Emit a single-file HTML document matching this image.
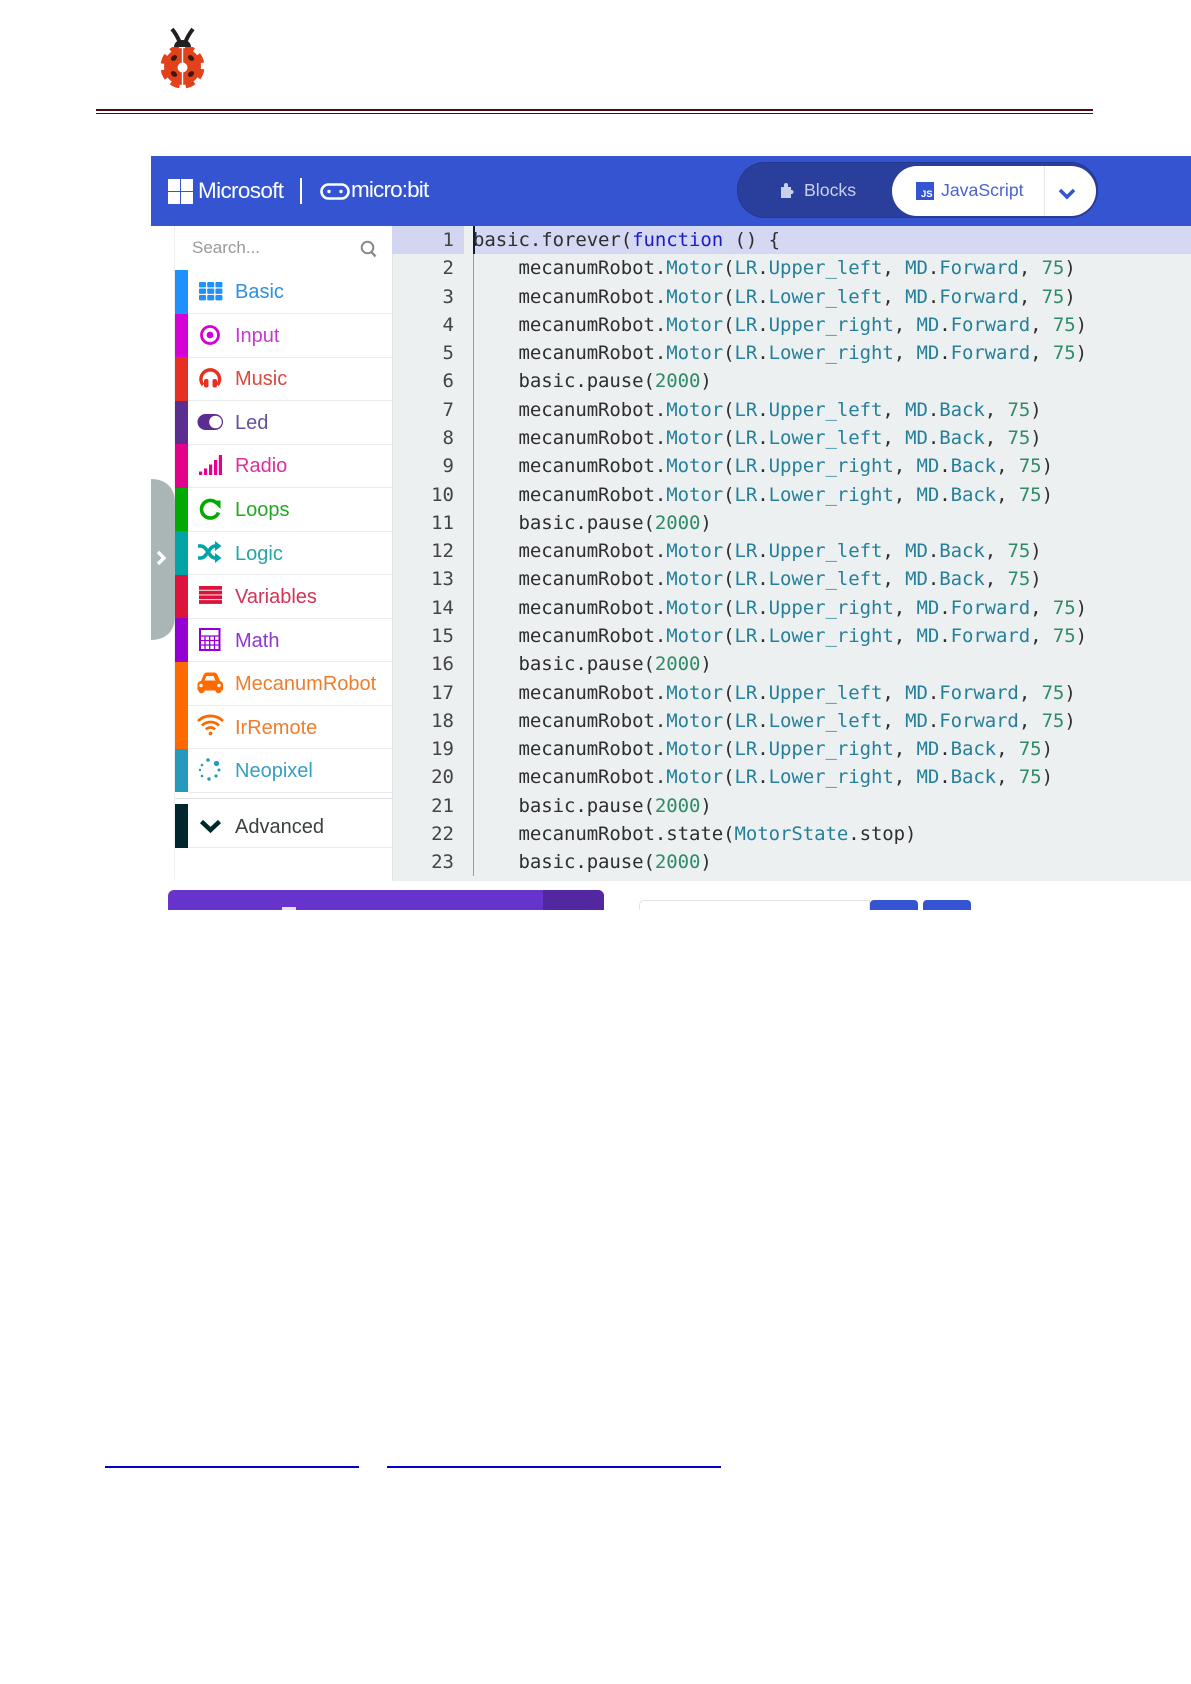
<!DOCTYPE html>
<html lang="en">
<head>
<meta charset="utf-8">
<title>Microbit MakeCode</title>
<style>
html,body{margin:0;padding:0;background:#fff}
body{position:relative;width:1191px;height:1684px;overflow:hidden;font-family:"Liberation Sans",sans-serif}
.a{position:absolute}
.code{position:absolute;left:473px;top:226px;font:19px/28.28px "DejaVu Sans Mono","Liberation Mono",monospace;letter-spacing:-.07px;color:#2e2e2e;white-space:pre;filter:blur(.3px)}
.nums{position:absolute;left:392px;width:62px;top:226px;font:19px/28.28px "DejaVu Sans Mono","Liberation Mono",monospace;color:#444;text-align:right;white-space:pre;filter:blur(.3px)}
.t{color:#267f99}.k{color:#1a1ac8}.n{color:#2f8a68}
.bar{position:absolute;left:175px;width:13px}
.lab{position:absolute;left:235px;font-size:20px;line-height:24px;white-space:nowrap;filter:blur(.3px)}
.sep{position:absolute;left:188px;width:204px;height:1px;background:#eaecec}
svg{position:absolute;overflow:visible}
</style>
</head>
<body>
<!-- logo -->
<svg style="left:0;top:0" width="300" height="100" viewBox="0 0 300 100">
<path d="M172 29 Q177 35 180 43 M193 29 Q188 35 185 43" fill="none" stroke="#231f20" stroke-width="4"/>
<g fill="#e2411c">
<circle cx="182.500" cy="66.500" r="18.500"/>
<circle cx="182.500" cy="66.500" r="19.500" fill="none" stroke="#e2411c" stroke-width="5" pathLength="80" stroke-dasharray="6 4" stroke-dashoffset="3" transform="rotate(22.500 182.500 66.500)"/>
</g>
<rect x="160" y="43" width="45" height="4" fill="#fff"/>
<path d="M174 47 Q174.500 40 182.500 40 Q190.500 40 191 47z" fill="#231f20"/>
<path d="M182.500 47 V86.500" stroke="#fff" stroke-width="1.400"/>
<circle cx="182.500" cy="67.500" r="5" fill="#fff"/>
<g fill="#3a1a10">
<ellipse cx="174" cy="58" rx="3.400" ry="2.500" transform="rotate(-40 174 58)"/><ellipse cx="191" cy="58" rx="3.400" ry="2.500" transform="rotate(40 191 58)"/>
<ellipse cx="174" cy="74" rx="3.400" ry="2.500" transform="rotate(40 174 74)"/><ellipse cx="191" cy="74" rx="3.400" ry="2.500" transform="rotate(-40 191 74)"/>
</g>
</svg>
<div class="a" style="left:96px;top:109px;width:997px;height:2px;background:#4b0a10"></div>
<div class="a" style="left:96px;top:113px;width:997px;height:1px;background:#4b0a10"></div>

<!-- header -->
<div class="a" style="left:151px;top:156px;width:1040px;height:70px;background:#3454d1"></div>
<svg style="left:0;top:0" width="500" height="226" viewBox="0 0 500 226">
<g fill="#fff"><rect x="168" y="179" width="12" height="12"/><rect x="181" y="179" width="12" height="12"/><rect x="168" y="192" width="12" height="12"/><rect x="181" y="192" width="12" height="12"/></g>
<rect x="300" y="178" width="2" height="26" fill="#fff"/>
<rect x="321.500" y="184.500" width="27" height="14" rx="7" fill="none" stroke="#fff" stroke-width="2.600"/>
<circle cx="329" cy="191.500" r="1.700" fill="#fff"/><circle cx="341" cy="191.500" r="1.700" fill="#fff"/>
</svg>
<div class="a" style="left:198px;top:177px;color:#fff;font-size:22.500px;line-height:28px;letter-spacing:-.65px">Microsoft</div>
<div class="a" style="left:351px;top:176px;color:#fff;font-size:22.500px;line-height:28px;letter-spacing:-.85px">micro:bit</div>

<div class="a" style="left:737px;top:162px;width:361px;height:56px;border-radius:28px;background:#2a3f9c;box-shadow:inset 0 0 0 1px #25378a"></div>
<div class="a" style="left:892px;top:166px;width:204px;height:50px;border-radius:25px;background:#fff"></div>
<div class="a" style="left:1044px;top:166px;width:1px;height:50px;background:#e6e6e6"></div>
<svg style="left:0;top:0" width="1191" height="226" viewBox="0 0 1191 226">
<path d="M781 187 h3 v-2 a2 2 0 0 1 4 0 v2 h3 v3 h.5 a1.700 1.700 0 0 1 0 4 h-.5 v4 h-10z" fill="#c9d0ea"/>
<rect x="916" y="182" width="18" height="18" fill="#3454d1"/>
<path d="M1060 190 l7 7 l7 -7" fill="none" stroke="#3454d1" stroke-width="3.500"/>
</svg>
<div class="a" style="left:921px;top:189px;color:#fff;font-size:9.500px;line-height:11px;font-weight:bold">JS</div>
<div class="a" style="left:804px;top:178px;color:#c9d0ea;font-size:17.700px;line-height:24px">Blocks</div>
<div class="a" style="left:941px;top:178px;color:#4a62cf;font-size:17.700px;line-height:24px">JavaScript</div>

<!-- toolbox -->
<div class="a" style="left:174px;top:226px;width:218px;height:655px;background:#fff;border-left:1px solid #eee;box-sizing:border-box"></div>
<div class="a" style="left:192px;top:236px;color:#999;font-size:17px;line-height:24px">Search...</div>
<svg style="left:0;top:0" width="400" height="270" viewBox="0 0 400 270">
<circle cx="367.500" cy="247.500" r="5.800" fill="none" stroke="#8a8a8a" stroke-width="2"/>
<path d="M371.500 252 l4 4.500" stroke="#8a8a8a" stroke-width="2.400"/>
</svg>

<div class="bar" style="top:270px;height:43.500px;background:#1e90ff"></div>
<div class="bar" style="top:313.500px;height:43.500px;background:#d400d4"></div>
<div class="bar" style="top:357px;height:43.500px;background:#e63022"></div>
<div class="bar" style="top:400.500px;height:43.500px;background:#5c2d91"></div>
<div class="bar" style="top:444px;height:43.500px;background:#e3008c"></div>
<div class="bar" style="top:487.500px;height:43.500px;background:#00aa00"></div>
<div class="bar" style="top:531px;height:43.500px;background:#00a4a6"></div>
<div class="bar" style="top:574.500px;height:43.500px;background:#dc143c"></div>
<div class="bar" style="top:618px;height:43.500px;background:#9400d3"></div>
<div class="bar" style="top:661.500px;height:87px;background:#ff6a00"></div>
<div class="bar" style="top:748.500px;height:43.500px;background:#2699bf"></div>
<div class="bar" style="top:804px;height:44px;background:#00272b"></div>

<div class="sep" style="top:313px"></div><div class="sep" style="top:357px"></div><div class="sep" style="top:400px"></div>
<div class="sep" style="top:444px"></div><div class="sep" style="top:487px"></div><div class="sep" style="top:531px"></div>
<div class="sep" style="top:574px"></div><div class="sep" style="top:618px"></div><div class="sep" style="top:661px"></div>
<div class="sep" style="top:705px"></div><div class="sep" style="top:748px"></div><div class="sep" style="top:792px"></div>
<div class="a" style="left:175px;top:798px;width:217px;height:1px;background:#dcdfe0"></div>
<div class="sep" style="top:847px"></div>

<div class="lab" style="top:280px;color:#2f8fe0">Basic</div>
<div class="lab" style="top:324px;color:#c738d0">Input</div>
<div class="lab" style="top:367px;color:#d8493e">Music</div>
<div class="lab" style="top:411px;color:#66509c">Led</div>
<div class="lab" style="top:454px;color:#df2f98">Radio</div>
<div class="lab" style="top:498px;color:#25a825">Loops</div>
<div class="lab" style="top:542px;color:#25a5a6">Logic</div>
<div class="lab" style="top:585px;color:#d33256">Variables</div>
<div class="lab" style="top:629px;color:#8f37d0">Math</div>
<div class="lab" style="top:672px;color:#ee7d2c">MecanumRobot</div>
<div class="lab" style="top:716px;color:#ee7d2c">IrRemote</div>
<div class="lab" style="top:759px;color:#359fc2">Neopixel</div>
<div class="lab" style="top:815px;color:#3a3f40">Advanced</div>

<svg style="left:0;top:0" width="392" height="860" viewBox="0 0 392 860">
<!-- basic -->
<g fill="#1e90ff">
<rect x="199" y="282" width="7" height="5.400" rx="1"/><rect x="207.200" y="282" width="7" height="5.400" rx="1"/><rect x="215.400" y="282" width="7" height="5.400" rx="1"/>
<rect x="199" y="288.500" width="7" height="5.400" rx="1"/><rect x="207.200" y="288.500" width="7" height="5.400" rx="1"/><rect x="215.400" y="288.500" width="7" height="5.400" rx="1"/>
<rect x="199" y="295" width="7" height="5.400" rx="1"/><rect x="207.200" y="295" width="7" height="5.400" rx="1"/><rect x="215.400" y="295" width="7" height="5.400" rx="1"/>
</g>
<!-- input -->
<circle cx="210" cy="335" r="8.500" fill="none" stroke="#d400d4" stroke-width="2.800"/><circle cx="210" cy="335" r="3.400" fill="#d400d4"/>
<!-- music -->
<path d="M203 385 a9.300 9.300 0 1 1 14.500 0" fill="none" stroke="#e63022" stroke-width="3.400"/>
<rect x="204" y="379" width="4.500" height="8.500" rx="2" fill="#e63022"/><rect x="212.500" y="379" width="4.500" height="8.500" rx="2" fill="#e63022"/>
<!-- led -->
<rect x="197.500" y="414" width="25.500" height="16" rx="8" fill="#5c2d91"/><circle cx="215.500" cy="422" r="6.300" fill="#fff"/>
<!-- radio -->
<g fill="#e3008c"><rect x="199" y="471.500" width="3.200" height="3.500"/><rect x="204" y="468.500" width="3.200" height="6.500"/><rect x="209" y="464.500" width="3.200" height="10.500"/><rect x="214" y="460" width="3.200" height="15"/><rect x="218.800" y="455" width="3.200" height="20"/></g>
<!-- loops -->
<path d="M217 503.500 a8.800 8.800 0 1 0 1.500 9" fill="none" stroke="#00aa00" stroke-width="3.600"/><path d="M212 500.500 h8.500 v8.500z" fill="#00aa00"/>
<!-- logic -->
<path d="M198 546 h3 c6 0 8 12 14 12 h2 M198 558 h3 c6 0 8 -12 14 -12 h2" fill="none" stroke="#00a4a6" stroke-width="3.500"/>
<path d="M215 541 l6.500 5 l-6.500 5z M215 553 l6.500 5 l-6.500 5z" fill="#00a4a6"/>
<!-- variables -->
<g fill="#dc143c"><rect x="199" y="586" width="23" height="3.800"/><rect x="199" y="590.700" width="23" height="3.800"/><rect x="199" y="595.400" width="23" height="3.800"/><rect x="199" y="600.100" width="23" height="3.800"/></g>
<!-- math -->
<rect x="200" y="629" width="19.500" height="21" fill="none" stroke="#9400d3" stroke-width="2"/>
<path d="M200 636 h19.500 M200 640.500 h19.500 M200 645 h19.500 M205 636 v14 M209.700 636 v14 M214.500 636 v14" stroke="#9400d3" stroke-width="1.300"/>
<!-- car -->
<path d="M201 681 l2.500 -6 c.7 -1.700 2 -2.500 3.500 -2.500 h7 c1.500 0 2.800 .8 3.500 2.500 l2.500 6 c2 .5 3 2 3 4 v4 c0 1 -.5 1.500 -1.500 1.500 h-22.500 c-1 0 -1.500 -.5 -1.500 -1.500 v-4 c0 -2 1 -3.500 3 -4z" fill="#ff6a00"/>
<circle cx="201.500" cy="690" r="3.200" fill="#ff6a00"/><circle cx="218.500" cy="690" r="3.200" fill="#ff6a00"/>
<path d="M204.500 680.500 l2 -4.500 h7 l2 4.500z" fill="#fff"/>
<circle cx="201" cy="685.500" r="1.700" fill="#fff"/><circle cx="219" cy="685.500" r="1.700" fill="#fff"/>
<!-- wifi -->
<path d="M198 721 a18 18 0 0 1 25 0 M202 725.500 a12 12 0 0 1 17 0 M206 729.500 a6 6 0 0 1 9 0" fill="none" stroke="#ff6a00" stroke-width="2.800"/>
<circle cx="210.500" cy="733.500" r="1.900" fill="#ff6a00"/>
<!-- neopixel -->
<g fill="#2699bf"><circle cx="216.500" cy="763.500" r="2.600"/><circle cx="208" cy="760" r="1.800"/><circle cx="202" cy="765" r="1.300"/><circle cx="200" cy="770" r="1.200"/><circle cx="202" cy="776" r="1.300"/><circle cx="209" cy="779" r="1.700"/><circle cx="216" cy="776" r="1.600"/><circle cx="219" cy="770" r="1.500"/></g>
<!-- advanced -->
<path d="M201.500 821.500 l9 8.500 l9 -8.500" fill="none" stroke="#00272b" stroke-width="4.500"/>
<!-- tab -->
<path d="M151 479 c14 0 24 8 24 24 v113 c0 16 -10 24 -24 24z" fill="#aab6b6"/>
<path d="M158 552 l6 6 l-6 6" fill="none" stroke="#fff" stroke-width="3.400"/>
</svg>

<!-- editor -->
<div class="a" style="left:392px;top:226px;width:799px;height:655px;background:#ecf0f1"></div>
<div class="a" style="left:392px;top:226px;width:1px;height:655px;background:#dfe3e4"></div>
<div class="a" style="left:392px;top:226px;width:72px;height:28px;background:#d2d6f1"></div>
<div class="a" style="left:473px;top:226px;width:718px;height:28px;background:#d5d8f3"></div>
<div class="a" style="left:473px;top:226px;width:1px;height:650px;background:#9aa0a2"></div>
<div class="a" style="left:473px;top:226px;width:2px;height:28px;background:#111a3a"></div>

<div class="nums">1
2
3
4
5
6
7
8
9
10
11
12
13
14
15
16
17
18
19
20
21
22
23</div>
<div class="code">basic.forever(<span class="k">function</span> () {
    mecanumRobot.<span class="t">Motor</span>(<span class="t">LR</span>.<span class="t">Upper_left</span>, <span class="t">MD</span>.<span class="t">Forward</span>, <span class="n">75</span>)
    mecanumRobot.<span class="t">Motor</span>(<span class="t">LR</span>.<span class="t">Lower_left</span>, <span class="t">MD</span>.<span class="t">Forward</span>, <span class="n">75</span>)
    mecanumRobot.<span class="t">Motor</span>(<span class="t">LR</span>.<span class="t">Upper_right</span>, <span class="t">MD</span>.<span class="t">Forward</span>, <span class="n">75</span>)
    mecanumRobot.<span class="t">Motor</span>(<span class="t">LR</span>.<span class="t">Lower_right</span>, <span class="t">MD</span>.<span class="t">Forward</span>, <span class="n">75</span>)
    basic.pause(<span class="n">2000</span>)
    mecanumRobot.<span class="t">Motor</span>(<span class="t">LR</span>.<span class="t">Upper_left</span>, <span class="t">MD</span>.<span class="t">Back</span>, <span class="n">75</span>)
    mecanumRobot.<span class="t">Motor</span>(<span class="t">LR</span>.<span class="t">Lower_left</span>, <span class="t">MD</span>.<span class="t">Back</span>, <span class="n">75</span>)
    mecanumRobot.<span class="t">Motor</span>(<span class="t">LR</span>.<span class="t">Upper_right</span>, <span class="t">MD</span>.<span class="t">Back</span>, <span class="n">75</span>)
    mecanumRobot.<span class="t">Motor</span>(<span class="t">LR</span>.<span class="t">Lower_right</span>, <span class="t">MD</span>.<span class="t">Back</span>, <span class="n">75</span>)
    basic.pause(<span class="n">2000</span>)
    mecanumRobot.<span class="t">Motor</span>(<span class="t">LR</span>.<span class="t">Upper_left</span>, <span class="t">MD</span>.<span class="t">Back</span>, <span class="n">75</span>)
    mecanumRobot.<span class="t">Motor</span>(<span class="t">LR</span>.<span class="t">Lower_left</span>, <span class="t">MD</span>.<span class="t">Back</span>, <span class="n">75</span>)
    mecanumRobot.<span class="t">Motor</span>(<span class="t">LR</span>.<span class="t">Upper_right</span>, <span class="t">MD</span>.<span class="t">Forward</span>, <span class="n">75</span>)
    mecanumRobot.<span class="t">Motor</span>(<span class="t">LR</span>.<span class="t">Lower_right</span>, <span class="t">MD</span>.<span class="t">Forward</span>, <span class="n">75</span>)
    basic.pause(<span class="n">2000</span>)
    mecanumRobot.<span class="t">Motor</span>(<span class="t">LR</span>.<span class="t">Upper_left</span>, <span class="t">MD</span>.<span class="t">Forward</span>, <span class="n">75</span>)
    mecanumRobot.<span class="t">Motor</span>(<span class="t">LR</span>.<span class="t">Lower_left</span>, <span class="t">MD</span>.<span class="t">Forward</span>, <span class="n">75</span>)
    mecanumRobot.<span class="t">Motor</span>(<span class="t">LR</span>.<span class="t">Upper_right</span>, <span class="t">MD</span>.<span class="t">Back</span>, <span class="n">75</span>)
    mecanumRobot.<span class="t">Motor</span>(<span class="t">LR</span>.<span class="t">Lower_right</span>, <span class="t">MD</span>.<span class="t">Back</span>, <span class="n">75</span>)
    basic.pause(<span class="n">2000</span>)
    mecanumRobot.state(<span class="t">MotorState</span>.stop)
    basic.pause(<span class="n">2000</span>)</div>

<!-- bottom strip -->
<div class="a" style="left:168px;top:890px;width:436px;height:20px;border-radius:6px 6px 0 0;background:#6633cc;overflow:hidden"><div class="a" style="left:375px;top:0;width:61px;height:20px;background:#52279f"></div><div class="a" style="left:114px;top:17px;width:14px;height:3px;background:#e8e0f6"></div></div>
<div class="a" style="left:639px;top:900px;width:231px;height:10px;border:1px solid #e4e4e4;border-bottom:0;border-radius:5px 0 0 0;box-sizing:border-box"></div>
<div class="a" style="left:870px;top:900px;width:48px;height:10px;background:#3454d1;border-radius:4px 4px 0 0"></div>
<div class="a" style="left:923px;top:900px;width:48px;height:10px;background:#3454d1;border-radius:4px 4px 0 0"></div>

<!-- link underlines -->
<div class="a" style="left:105px;top:1466px;width:254px;height:2px;background:#0000cc"></div>
<div class="a" style="left:387px;top:1466px;width:334px;height:2px;background:#0000cc"></div>
</body>
</html>
